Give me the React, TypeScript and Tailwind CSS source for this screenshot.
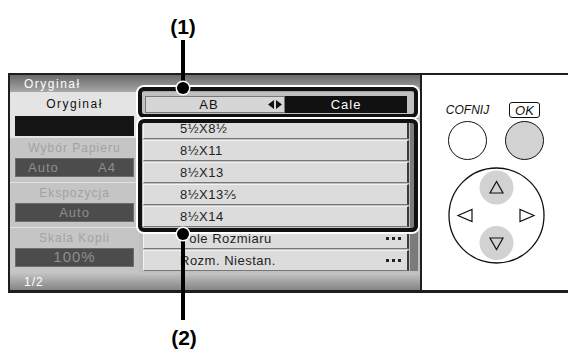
import React from 'react';

const listItems = [
  { label: '5½X8½' },
  { label: '8½X11' },
  { label: '8½X13' },
  { label: '8½X13⅖' },
  { label: '8½X14' },
  { label: 'Pole Rozmiaru', more: true },
  { label: 'Rozm. Niestan.', more: true },
];

const disabledGroups = [
  { label: 'Wybór Papieru', left: 'Auto', right: 'A4' },
  { label: 'Ekspozycja', value: 'Auto' },
  { label: 'Skala Kopii', value: '100%', big: true },
];

const Dots = () => (
  <div className="ml-auto mr-[6px] flex gap-[3px]">
    <span className="h-[3px] w-[3px] bg-[#222]" />
    <span className="h-[3px] w-[3px] bg-[#222]" />
    <span className="h-[3px] w-[3px] bg-[#222]" />
  </div>
);

const DPad = () => (
  <svg width="97" height="97" viewBox="0 0 97 97">
    <circle cx="48.5" cy="48.5" r="47.5" fill="white" stroke="#111" strokeWidth="1.3" />
    <circle cx="48.5" cy="20.5" r="17" fill="#d2d2d2" />
    <circle cx="48.5" cy="76" r="17" fill="#d2d2d2" />
    <polygon points="48.5,14.5 42,26 55,26" fill="none" stroke="#111" strokeWidth="1.2" />
    <polygon points="42,71 55,71 48.5,82.5" fill="none" stroke="#111" strokeWidth="1.2" />
    <polygon points="10,48.5 24,42.5 24,54.5" fill="none" stroke="#111" strokeWidth="1.2" />
    <polygon points="86,48.5 72,42.5 72,54.5" fill="none" stroke="#111" strokeWidth="1.2" />
  </svg>
);

const App: React.FC = () => {
  return (
    <div className="relative h-[349px] w-[568px] overflow-hidden bg-white font-['Liberation_Sans','DejaVu_Sans',sans-serif]">
      <div className="h-[73px]" />

      {/* device */}
      <div className="ml-[8px] flex h-[220px] border-t-2 border-b-[3px] border-[#1e1e1e]">
        {/* screen */}
        <div className="flex w-[414px] flex-col border-l-2 border-r-2 border-[#1e1e1e]">
          <div className="flex h-[17px] items-center bg-linear-to-b from-[#6a6a6a] to-[#a8a8a8] pl-[14px] text-[12px] tracking-[1.5px] text-white">
            Oryginał
          </div>

          <div className="flex h-[181px]">
            {/* left column */}
            <div className="flex w-[129px] flex-col bg-[#c5c5c5]">
              <div className="flex h-[45px] flex-col bg-[#e4e4e4] px-[5px]">
                <div className="flex h-[24px] items-center justify-center text-[12px] tracking-[1.5px] text-[#111]">
                  Oryginał
                </div>
                <div className="h-[20px] bg-[#141414]" />
              </div>
              {disabledGroups.map((g) => (
                <div key={g.label} className="flex h-[45px] flex-col border-t border-[#e0e0e0] px-[5px] pb-[5px]">
                  <div className="flex h-[20px] items-center justify-center text-[12px] tracking-[1px] text-[#a2a2a2]">
                    {g.label}
                  </div>
                  <div
                    className={`flex h-[19px] items-center border border-[#6c6c6c] bg-[#4c4c4c] tracking-[1px] text-[#8e8e8e] ${
                      g.value ? 'justify-center' : 'justify-between pl-[12px] pr-[17px]'
                    } ${g.big ? 'text-[15px]' : 'text-[13px]'}`}
                  >
                    {g.value ? g.value : (
                      <>
                        <span>{g.left}</span>
                        <span>{g.right}</span>
                      </>
                    )}
                  </div>
                </div>
              ))}
            </div>

            {/* center panel */}
            <div className="flex flex-1 flex-col bg-[#c0c0c0]">
              <div className="ml-[6px] mt-[4px] flex h-[17px] w-[262px] text-[13px] tracking-[1px]">
                <div className="flex flex-1 items-center border border-[#777] bg-[#d6d6d6] text-[#111]">
                  <span className="flex-1 pl-[4px] text-center">AB</span>
                  <svg width="14" height="9" viewBox="0 0 14 9" className="mr-[2px]">
                    <polygon points="0,4.5 6,0 6,9" fill="#111" />
                    <polygon points="14,4.5 8,0 8,9" fill="#111" />
                  </svg>
                </div>
                <div className="flex w-[122px] items-center justify-center bg-[#111] text-white">Cale</div>
              </div>

              <div className="mt-[5px] flex">
                <div className="ml-[4px] flex w-[266px] flex-col gap-[1px]">
                  {listItems.map((it) => (
                    <div
                      key={it.label}
                      className="flex h-[21px] items-center border-t border-l border-t-[#f2f2f2] border-l-[#f2f2f2] border-r-2 border-b border-r-[#3a3a3a] border-b-[#777] bg-[#dcdcdc] pl-[36px] text-[13px] tracking-[0.5px] text-[#222]"
                    >
                      {it.label}
                      {it.more && <Dots />}
                    </div>
                  ))}
                </div>
                <div className="ml-[1px] h-[153px] w-[8px] bg-[#7b7b7b]" />
              </div>
            </div>
          </div>

          <div className="flex h-[17px] items-center bg-linear-to-b from-[#c4c4c4] to-[#858585] pl-[14px] text-[12px] tracking-[1px] text-white">
            1/2
          </div>
        </div>

        {/* control panel */}
        <div className="flex flex-1 flex-col bg-white pt-[27px]">
          <div className="flex gap-[18px] pl-[26px]">
            <div className="flex w-[39px] flex-col items-center">
              <div className="flex h-[16px] items-center whitespace-nowrap text-[12px] italic text-[#111]">COFNIJ</div>
              <div className="mt-[3px] h-[39px] w-[39px] rounded-full border border-[#111] bg-white" />
            </div>
            <div className="flex w-[39px] flex-col items-center">
              <div className="flex h-[16px] w-[31px] items-center justify-center rounded-[3px] border border-[#111] text-[13px] italic leading-none text-[#111]">
                OK
              </div>
              <div className="mt-[3px] h-[39px] w-[39px] rounded-full border border-[#111] bg-[#d2d2d2]" />
            </div>
          </div>
          <div className="ml-[26px] mt-[7px]">
            <DPad />
          </div>
        </div>
      </div>

      {/* callouts */}
      <div className="absolute left-[158px] top-[14px] w-[50px] text-center text-[21px] font-bold leading-[26px] text-black">(1)</div>
      <div className="absolute left-[181px] top-[40px] h-[48px] w-[4px] bg-black" />
      <div className="absolute left-[138px] top-[87px] h-[31px] w-[280px] rounded-[6px] border-[4px] border-[#111] shadow-[0_0_0_2px_white]" />
      <div className="absolute left-[138px] top-[119px] h-[113px] w-[280px] rounded-[6px] border-[4px] border-[#111] shadow-[0_0_0_2px_white]" />
      <div className="absolute left-[177px] top-[82px] h-[12px] w-[12px] rounded-full bg-black shadow-[0_0_0_1.5px_white]" />
      <div className="absolute left-[181px] top-[234px] h-[86px] w-[4px] bg-black" />
      <div className="absolute left-[177px] top-[228px] h-[12px] w-[12px] rounded-full bg-black shadow-[0_0_0_1.5px_white]" />
      <div className="absolute left-[159px] top-[325px] w-[50px] text-center text-[21px] font-bold leading-[26px] text-black">(2)</div>
    </div>
  );
};

export default App;
